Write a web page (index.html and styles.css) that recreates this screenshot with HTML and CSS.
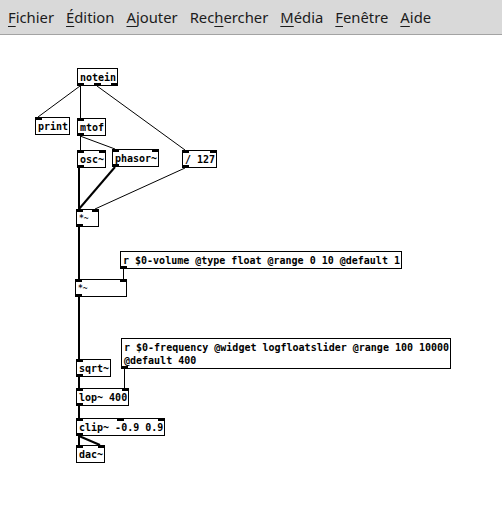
FILE: index.html
```html
<!DOCTYPE html>
<html lang="fr">
<head>
<meta charset="utf-8">
<title>Pd patch</title>
<link rel="stylesheet" href="styles.css">
</head>
<body>
<nav class="menubar">
  <span class="item"><u>F</u>ichier</span>
  <span class="item"><u>É</u>dition</span>
  <span class="item"><u>A</u>jouter</span>
  <span class="item">Rec<u>h</u>ercher</span>
  <span class="item"><u>M</u>édia</span>
  <span class="item"><u>F</u>enêtre</span>
  <span class="item"><u>A</u>ide</span>
</nav>
<main class="canvas">
  <svg class="wires" width="502" height="474" viewBox="0 0 502 474">
    <g class="ctl">
      <line x1="80" y1="51" x2="38" y2="82"/>
      <line x1="80.5" y1="51" x2="80.5" y2="83"/>
      <line x1="97" y1="51" x2="185" y2="115"/>
      <line x1="80.5" y1="101" x2="80.5" y2="115"/>
      <line x1="80" y1="101" x2="115" y2="114"/>
      <line x1="185" y1="133" x2="95" y2="174"/>
      <line x1="123.5" y1="234" x2="123.5" y2="244"/>
      <line x1="124.5" y1="334" x2="124.5" y2="353"/>
    </g>
    <g class="sig">
      <line x1="79" y1="133" x2="79" y2="174"/>
      <line x1="115" y1="132" x2="79" y2="174"/>
      <line x1="79" y1="192" x2="79" y2="244"/>
      <line x1="79" y1="262" x2="79" y2="324"/>
      <line x1="79" y1="342" x2="79" y2="353"/>
      <line x1="79" y1="371" x2="79" y2="383"/>
      <line x1="79" y1="401" x2="79" y2="410"/>
      <line x1="79" y1="401" x2="100" y2="410"/>
    </g>
  </svg>

  <div class="obj" style="left:77px;top:33px">notein<i class="out l"></i><i class="out m"></i><i class="out r"></i></div>
  <div class="obj" style="left:35px;top:82px">print<i class="in l"></i></div>
  <div class="obj" style="left:77px;top:83px">mtof<i class="in l"></i><i class="out l"></i></div>
  <div class="obj" style="left:77px;top:115px">osc~<i class="in l"></i><i class="in r"></i><i class="out l"></i></div>
  <div class="obj" style="left:112px;top:114px">phasor~<i class="in l"></i><i class="in r"></i><i class="out l"></i></div>
  <div class="obj" style="left:182px;top:115px">/ 127<i class="in l"></i><i class="in r"></i><i class="out l"></i></div>
  <div class="obj tiny" style="left:76px;top:174px;width:18px">*~<i class="in l"></i><i class="in r"></i><i class="out l"></i></div>
  <div class="obj" style="left:120px;top:216px">r $0-volume @type float @range 0 10 @default 1<i class="out l"></i></div>
  <div class="obj tiny" style="left:75px;top:244px;width:47px">*~<i class="in l"></i><i class="in r"></i><i class="out l"></i></div>
  <div class="obj" style="left:121px;top:303px">r $0-frequency @widget logfloatslider @range 100 10000<br>@default 400<i class="out l"></i></div>
  <div class="obj" style="left:76px;top:324px">sqrt~<i class="in l"></i><i class="out l"></i></div>
  <div class="obj" style="left:76px;top:353px">lop~ 400<i class="in l"></i><i class="in r"></i><i class="out l"></i></div>
  <div class="obj" style="left:76px;top:383px">clip~ -0.9 0.9<i class="in l"></i><i class="in m"></i><i class="in r"></i><i class="out l"></i></div>
  <div class="obj" style="left:76px;top:410px">dac~<i class="in l"></i><i class="in r"></i></div>
</main>
</body>
</html>
```
FILE: styles.css
```css
html, body {
  margin: 0;
  padding: 0;
  background: #ffffff;
  width: 502px;
  height: 510px;
  overflow: hidden;
}

.menubar {
  display: flex;
  align-items: center;
  height: 35px;
  box-sizing: border-box;
  padding-left: 8px;
  gap: 12px;
  background: #d9d9d9;
  border-bottom: 1px solid #a3a3a3;
  font-family: "Noto Sans", "Open Sans", sans-serif;
  font-size: 14.8px;
  color: #1c1c1c;
}

.menubar .item u {
  text-decoration-thickness: 1px;
  text-underline-offset: 3px;
}

.canvas {
  position: relative;
  width: 502px;
  height: 474px;
  background: #ffffff;
}

.wires {
  position: absolute;
  left: 0;
  top: 0;
}

.wires line {
  stroke: #000;
  stroke-linecap: butt;
}

.wires .ctl line {
  stroke-width: 1;
}

.wires .sig line {
  stroke-width: 2;
}

.obj {
  position: absolute;
  box-sizing: content-box;
  padding: 2px 1px 1px 2px;
  border: 1px solid #000;
  background: #fff;
  font-family: "DejaVu Sans Mono", monospace;
  font-weight: bold;
  font-size: 10px;
  line-height: 13px;
  color: #000;
  white-space: nowrap;
}

.obj.tiny {
  font-size: 8px;
  font-weight: bold;
  line-height: 13px;
  color: #1a1a2a;
}

.obj i {
  position: absolute;
  width: 7px;
  height: 3px;
  background: #000;
}

.obj .in { top: -1px; }
.obj .out { bottom: -1px; }
.obj .l { left: -1px; }
.obj .r { right: -1px; }
.obj .m { left: calc(50% - 3.5px); }
```
